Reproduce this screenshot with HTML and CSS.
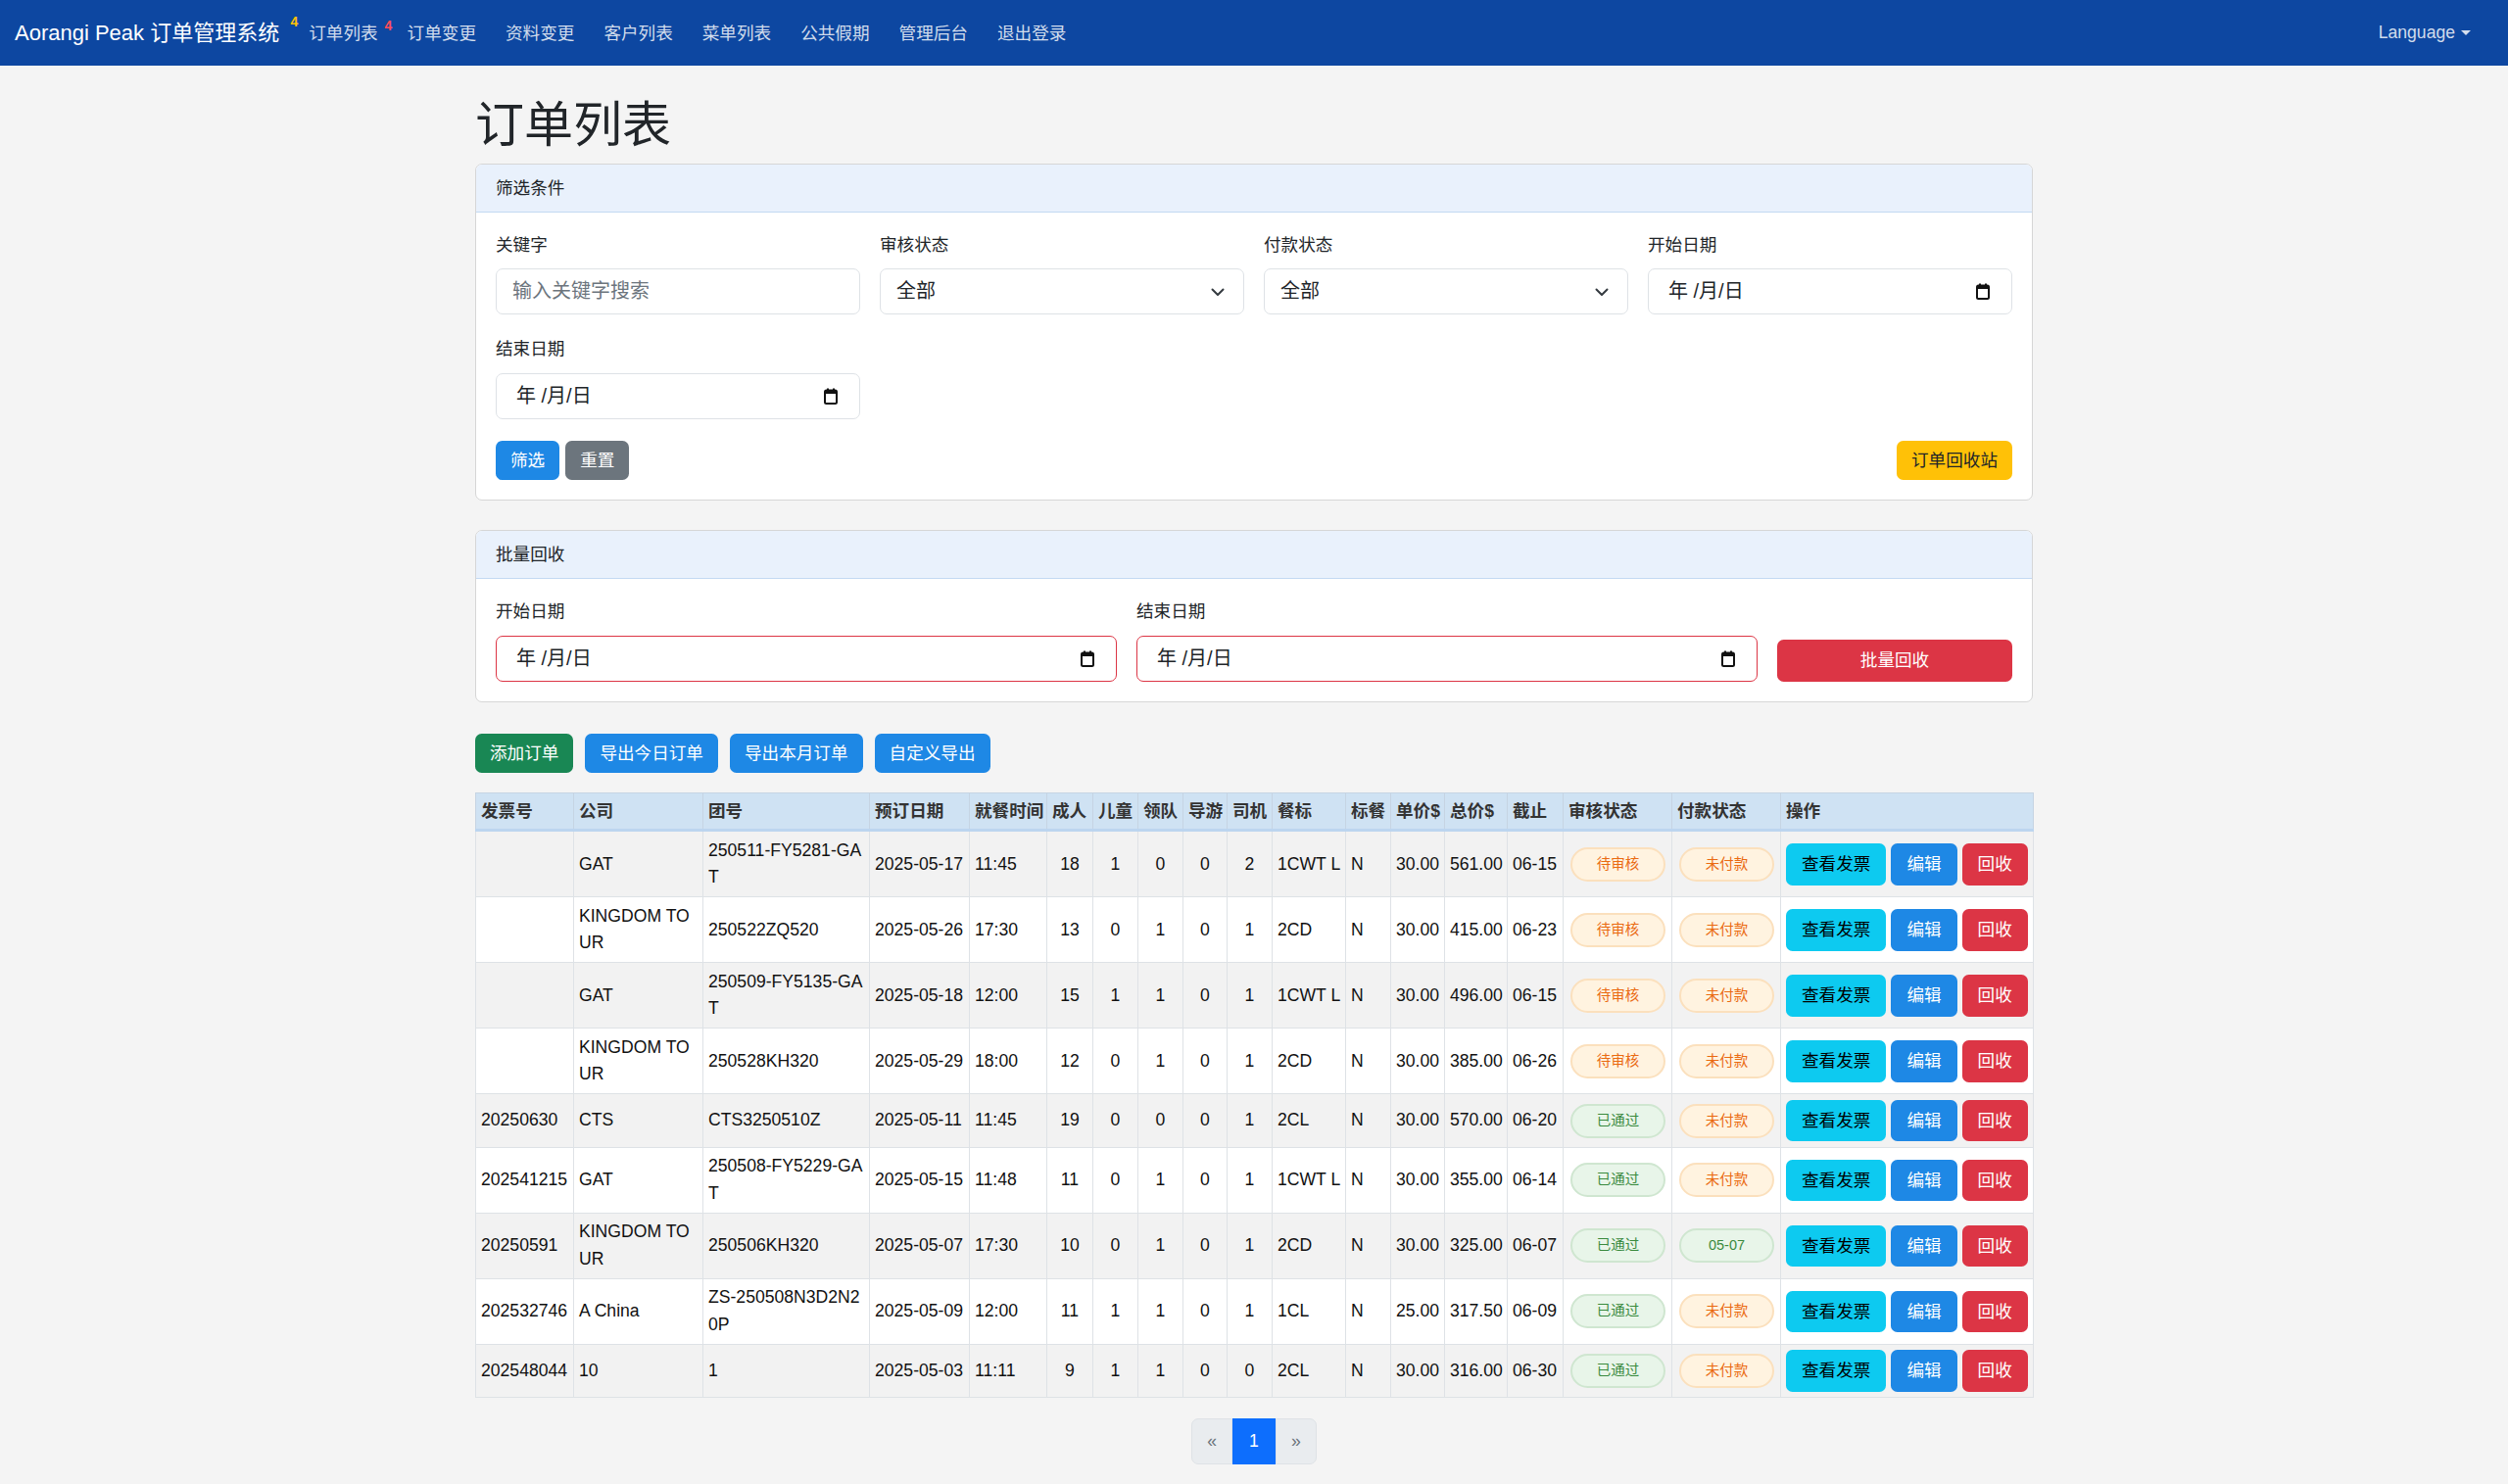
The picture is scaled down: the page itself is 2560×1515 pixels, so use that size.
FILE: index.html
```html
<!DOCTYPE html>
<html lang="zh-CN">
<head>
<meta charset="utf-8">
<title>订单列表 - Aorangi Peak 订单管理系统</title>
<link rel="stylesheet" href="styles.css">
</head>
<body>
<nav class="navbar">
  <a class="brand">Aorangi Peak 订单管理系统<span class="nbadge yellow">4</span></a>
  <ul class="nav-links">
    <li><a class="nav-link">订单列表<span class="nbadge red">4</span></a></li>
    <li><a class="nav-link">订单变更</a></li>
    <li><a class="nav-link">资料变更</a></li>
    <li><a class="nav-link">客户列表</a></li>
    <li><a class="nav-link">菜单列表</a></li>
    <li><a class="nav-link">公共假期</a></li>
    <li><a class="nav-link">管理后台</a></li>
    <li><a class="nav-link">退出登录</a></li>
  </ul>
  <div class="lang">Language<span class="caret"></span></div>
</nav>

<main class="container">
  <h1 class="page-title">订单列表</h1>

  <section class="card">
    <div class="card-header">筛选条件</div>
    <div class="card-body">
      <div class="filter-grid">
        <div class="field">
          <label class="form-label">关键字</label>
          <div class="form-control placeholder">输入关键字搜索</div>
        </div>
        <div class="field">
          <label class="form-label">审核状态</label>
          <div class="form-control select">全部
            <svg class="chev" width="14" height="9" viewBox="0 0 14 9"><path d="M1.5 1.5 7 7l5.5-5.5" stroke="#343a40" stroke-width="2" fill="none" stroke-linecap="round" stroke-linejoin="round"/></svg>
          </div>
        </div>
        <div class="field">
          <label class="form-label">付款状态</label>
          <div class="form-control select">全部
            <svg class="chev" width="14" height="9" viewBox="0 0 14 9"><path d="M1.5 1.5 7 7l5.5-5.5" stroke="#343a40" stroke-width="2" fill="none" stroke-linecap="round" stroke-linejoin="round"/></svg>
          </div>
        </div>
        <div class="field">
          <label class="form-label">开始日期</label>
          <div class="form-control date">年 /月/日
            <svg class="cal" width="14" height="17" viewBox="0 0 14 17"><rect x="1" y="2.5" width="12" height="13.5" rx="1.5" fill="none" stroke="#111" stroke-width="2"/><rect x="1" y="2.5" width="12" height="3.5" fill="#111"/><rect x="3" y="0.5" width="2" height="3" fill="#111"/><rect x="9" y="0.5" width="2" height="3" fill="#111"/></svg>
          </div>
        </div>
        <div class="field">
          <label class="form-label">结束日期</label>
          <div class="form-control date">年 /月/日
            <svg class="cal" width="14" height="17" viewBox="0 0 14 17"><rect x="1" y="2.5" width="12" height="13.5" rx="1.5" fill="none" stroke="#111" stroke-width="2"/><rect x="1" y="2.5" width="12" height="3.5" fill="#111"/><rect x="3" y="0.5" width="2" height="3" fill="#111"/><rect x="9" y="0.5" width="2" height="3" fill="#111"/></svg>
          </div>
        </div>
      </div>
      <div class="filter-actions">
        <div class="btn-group">
          <button class="btn btn-blue">筛选</button>
          <button class="btn btn-grey">重置</button>
        </div>
        <button class="btn btn-yellow">订单回收站</button>
      </div>
    </div>
  </section>

  <section class="card card-batch">
    <div class="card-header">批量回收</div>
    <div class="card-body">
      <div class="batch-grid">
        <div class="field">
          <label class="form-label">开始日期</label>
          <div class="form-control date danger">年 /月/日
            <svg class="cal" width="14" height="17" viewBox="0 0 14 17"><rect x="1" y="2.5" width="12" height="13.5" rx="1.5" fill="none" stroke="#111" stroke-width="2"/><rect x="1" y="2.5" width="12" height="3.5" fill="#111"/><rect x="3" y="0.5" width="2" height="3" fill="#111"/><rect x="9" y="0.5" width="2" height="3" fill="#111"/></svg>
          </div>
        </div>
        <div class="field">
          <label class="form-label">结束日期</label>
          <div class="form-control date danger">年 /月/日
            <svg class="cal" width="14" height="17" viewBox="0 0 14 17"><rect x="1" y="2.5" width="12" height="13.5" rx="1.5" fill="none" stroke="#111" stroke-width="2"/><rect x="1" y="2.5" width="12" height="3.5" fill="#111"/><rect x="3" y="0.5" width="2" height="3" fill="#111"/><rect x="9" y="0.5" width="2" height="3" fill="#111"/></svg>
          </div>
        </div>
        <button class="btn btn-red btn-batch">批量回收</button>
      </div>
    </div>
  </section>

  <div class="toolbar">
    <button class="btn btn-green">添加订单</button>
    <button class="btn btn-blue">导出今日订单</button>
    <button class="btn btn-blue">导出本月订单</button>
    <button class="btn btn-blue">自定义导出</button>
  </div>

  <table class="orders">
    <colgroup>
      <col class="w100"><col class="w132"><col class="w170"><col class="w102"><col class="w79">
      <col class="w47"><col class="w46"><col class="w46"><col class="w45"><col class="w46">
      <col class="w75"><col class="w46"><col class="w55"><col class="w64"><col class="w57">
      <col class="w111"><col class="w111"><col class="w258">
    </colgroup>
    <thead>
      <tr>
        <th>发票号</th><th>公司</th><th>团号</th><th>预订日期</th><th>就餐时间</th>
        <th>成人</th><th>儿童</th><th>领队</th><th>导游</th><th>司机</th>
        <th>餐标</th><th>标餐</th><th>单价$</th><th>总价$</th><th>截止</th>
        <th>审核状态</th><th>付款状态</th><th>操作</th>
      </tr>
    </thead>
    <tbody>
      <tr>
        <td></td><td class="wrap">GAT</td><td class="wrap">250511-FY5281-GAT</td><td>2025-05-17</td><td>11:45</td>
        <td class="c">18</td><td class="c">1</td><td class="c">0</td><td class="c">0</td><td class="c">2</td>
        <td class="clip">1CWT L</td><td>N</td><td>30.00</td><td>561.00</td><td>06-15</td>
        <td><span class="pill warn">待审核</span></td><td><span class="pill warn">未付款</span></td>
        <td><div class="acts"><button class="btn btn-cyan sm">查看发票</button><button class="btn btn-blue sm">编辑</button><button class="btn btn-red sm">回收</button></div></td>
      </tr>
      <tr>
        <td></td><td class="wrap">KINGDOM TOUR</td><td class="wrap">250522ZQ520</td><td>2025-05-26</td><td>17:30</td>
        <td class="c">13</td><td class="c">0</td><td class="c">1</td><td class="c">0</td><td class="c">1</td>
        <td class="clip">2CD</td><td>N</td><td>30.00</td><td>415.00</td><td>06-23</td>
        <td><span class="pill warn">待审核</span></td><td><span class="pill warn">未付款</span></td>
        <td><div class="acts"><button class="btn btn-cyan sm">查看发票</button><button class="btn btn-blue sm">编辑</button><button class="btn btn-red sm">回收</button></div></td>
      </tr>
      <tr>
        <td></td><td class="wrap">GAT</td><td class="wrap">250509-FY5135-GAT</td><td>2025-05-18</td><td>12:00</td>
        <td class="c">15</td><td class="c">1</td><td class="c">1</td><td class="c">0</td><td class="c">1</td>
        <td class="clip">1CWT L</td><td>N</td><td>30.00</td><td>496.00</td><td>06-15</td>
        <td><span class="pill warn">待审核</span></td><td><span class="pill warn">未付款</span></td>
        <td><div class="acts"><button class="btn btn-cyan sm">查看发票</button><button class="btn btn-blue sm">编辑</button><button class="btn btn-red sm">回收</button></div></td>
      </tr>
      <tr>
        <td></td><td class="wrap">KINGDOM TOUR</td><td class="wrap">250528KH320</td><td>2025-05-29</td><td>18:00</td>
        <td class="c">12</td><td class="c">0</td><td class="c">1</td><td class="c">0</td><td class="c">1</td>
        <td class="clip">2CD</td><td>N</td><td>30.00</td><td>385.00</td><td>06-26</td>
        <td><span class="pill warn">待审核</span></td><td><span class="pill warn">未付款</span></td>
        <td><div class="acts"><button class="btn btn-cyan sm">查看发票</button><button class="btn btn-blue sm">编辑</button><button class="btn btn-red sm">回收</button></div></td>
      </tr>
      <tr>
        <td>20250630</td><td class="wrap">CTS</td><td class="wrap">CTS3250510Z</td><td>2025-05-11</td><td>11:45</td>
        <td class="c">19</td><td class="c">0</td><td class="c">0</td><td class="c">0</td><td class="c">1</td>
        <td class="clip">2CL</td><td>N</td><td>30.00</td><td>570.00</td><td>06-20</td>
        <td><span class="pill ok">已通过</span></td><td><span class="pill warn">未付款</span></td>
        <td><div class="acts"><button class="btn btn-cyan sm">查看发票</button><button class="btn btn-blue sm">编辑</button><button class="btn btn-red sm">回收</button></div></td>
      </tr>
      <tr>
        <td>202541215</td><td class="wrap">GAT</td><td class="wrap">250508-FY5229-GAT</td><td>2025-05-15</td><td>11:48</td>
        <td class="c">11</td><td class="c">0</td><td class="c">1</td><td class="c">0</td><td class="c">1</td>
        <td class="clip">1CWT L</td><td>N</td><td>30.00</td><td>355.00</td><td>06-14</td>
        <td><span class="pill ok">已通过</span></td><td><span class="pill warn">未付款</span></td>
        <td><div class="acts"><button class="btn btn-cyan sm">查看发票</button><button class="btn btn-blue sm">编辑</button><button class="btn btn-red sm">回收</button></div></td>
      </tr>
      <tr>
        <td>20250591</td><td class="wrap">KINGDOM TOUR</td><td class="wrap">250506KH320</td><td>2025-05-07</td><td>17:30</td>
        <td class="c">10</td><td class="c">0</td><td class="c">1</td><td class="c">0</td><td class="c">1</td>
        <td class="clip">2CD</td><td>N</td><td>30.00</td><td>325.00</td><td>06-07</td>
        <td><span class="pill ok">已通过</span></td><td><span class="pill ok">05-07</span></td>
        <td><div class="acts"><button class="btn btn-cyan sm">查看发票</button><button class="btn btn-blue sm">编辑</button><button class="btn btn-red sm">回收</button></div></td>
      </tr>
      <tr>
        <td>202532746</td><td class="wrap">A China</td><td class="wrap">ZS-250508N3D2N20P</td><td>2025-05-09</td><td>12:00</td>
        <td class="c">11</td><td class="c">1</td><td class="c">1</td><td class="c">0</td><td class="c">1</td>
        <td class="clip">1CL</td><td>N</td><td>25.00</td><td>317.50</td><td>06-09</td>
        <td><span class="pill ok">已通过</span></td><td><span class="pill warn">未付款</span></td>
        <td><div class="acts"><button class="btn btn-cyan sm">查看发票</button><button class="btn btn-blue sm">编辑</button><button class="btn btn-red sm">回收</button></div></td>
      </tr>
      <tr>
        <td>202548044</td><td class="wrap">10</td><td class="wrap">1</td><td>2025-05-03</td><td>11:11</td>
        <td class="c">9</td><td class="c">1</td><td class="c">1</td><td class="c">0</td><td class="c">0</td>
        <td class="clip">2CL</td><td>N</td><td>30.00</td><td>316.00</td><td>06-30</td>
        <td><span class="pill ok">已通过</span></td><td><span class="pill warn">未付款</span></td>
        <td><div class="acts"><button class="btn btn-cyan sm">查看发票</button><button class="btn btn-blue sm">编辑</button><button class="btn btn-red sm">回收</button></div></td>
      </tr>
    </tbody>
  </table>

  <nav class="pager">
    <span class="page-item first">«</span>
    <span class="page-item active">1</span>
    <span class="page-item last">»</span>
  </nav>
</main>
</body>
</html>
```

FILE: styles.css
```css
* { box-sizing: border-box; }

body {
  margin: 0;
  background: #f4f4f4;
  color: #212529;
  font-family: "Liberation Sans", Arial, "Noto Sans CJK SC", sans-serif;
  font-size: 17.6px;
  line-height: 1.5;
}

/* ---------- navbar ---------- */
.navbar {
  height: 67px;
  background: #0d47a1;
  display: flex;
  align-items: center;
  padding: 0 38px 0 15px;
}
.brand {
  position: relative;
  color: #fff;
  font-size: 22px;
  line-height: 33px;
  margin-right: 15px;
  white-space: nowrap;
}
.nbadge {
  position: absolute;
  font-size: 14px;
  font-weight: 700;
  line-height: 14px;
  top: -2px;
}
.brand .nbadge { right: -19px; }
.nbadge.yellow { color: #ffc107; }
.nav-link .nbadge.red { color: #ff4d5a; top: -2px; left: calc(100% - 8px); }
.nav-links {
  list-style: none;
  margin: 0;
  padding: 0;
  display: flex;
}
.nav-link {
  position: relative;
  display: block;
  padding: 0 15px;
  color: rgba(255, 255, 255, 0.82);
  line-height: 26px;
  white-space: nowrap;
}
.lang {
  margin-left: auto;
  color: rgba(255, 255, 255, 0.82);
  display: flex;
  align-items: center;
}
.caret {
  display: inline-block;
  margin-left: 6px;
  border-top: 5px solid rgba(255, 255, 255, 0.82);
  border-left: 5px solid transparent;
  border-right: 5px solid transparent;
}

/* ---------- container ---------- */
.container {
  width: 1590px;
  margin: 0 auto;
  padding-top: 31px;
}
.page-title {
  font-size: 50px;
  font-weight: 400;
  line-height: 60px;
  margin: 0 0 9px;
}

/* ---------- cards ---------- */
.card {
  background: #fff;
  border: 1px solid #d6d6d6;
  border-radius: 7px;
  overflow: hidden;
}
.card-batch { margin-top: 30px; }
.card-header {
  height: 49px;
  line-height: 48px;
  padding: 0 20px;
  background: #e9f1fc;
  border-bottom: 1px solid #c3d9f2;
}
.card-body { padding: 20px; }

.filter-grid {
  display: grid;
  grid-template-columns: repeat(4, 1fr);
  column-gap: 20px;
}
.field { margin-bottom: 22px; }
.batch-grid .field { margin-bottom: 0; }
.form-label {
  display: block;
  line-height: 26.4px;
  margin-bottom: 11px;
}
.form-control {
  position: relative;
  height: 47px;
  border: 1px solid #dee2e6;
  border-radius: 7px;
  background: #fff;
  padding: 0 16px;
  font-size: 20px;
  line-height: 45px;
  color: #212529;
}
.form-control.placeholder { color: #6c757d; }
.form-control.date { padding-left: 20px; }
.form-control.danger { border-color: #dc3545; }
.chev {
  position: absolute;
  right: 19px;
  top: 19px;
}
.cal {
  position: absolute;
  right: 22px;
  top: 14px;
}

.filter-actions {
  display: flex;
  justify-content: space-between;
  align-items: center;
}
.btn-group { display: flex; gap: 6px; }

.batch-grid {
  display: grid;
  grid-template-columns: 1fr 1fr 240px;
  column-gap: 20px;
  align-items: end;
}
.btn-batch {
  height: 43px;
  width: 100%;
}

/* ---------- buttons ---------- */
.btn {
  font-family: inherit;
  font-size: 17.6px;
  line-height: 26.4px;
  padding: 6px 14px;
  border: 1px solid transparent;
  border-radius: 6.6px;
  color: #fff;
  cursor: pointer;
  white-space: nowrap;
}
.btn-blue { background: #1e88e5; }
.btn-grey { background: #6c757d; }
.btn-yellow { background: #ffc107; color: #212529; }
.btn-red { background: #dc3545; }
.btn-green { background: #198754; }
.btn-cyan { background: #0dcaf0; color: #000; }
.btn.sm { padding: 7px 15px; }

.toolbar {
  margin-top: 32px;
  display: flex;
  gap: 12px;
}

/* ---------- table ---------- */
.orders {
  margin-top: 20px;
  width: 1590px;
  table-layout: fixed;
  border-collapse: collapse;
  border: 1px solid #dee2e6;
  background: #fff;
}
.w100 { width: 100px; } .w132 { width: 132px; } .w170 { width: 170px; }
.w102 { width: 102px; } .w79 { width: 79px; } .w47 { width: 47px; }
.w46 { width: 46px; } .w45 { width: 45px; } .w75 { width: 75px; }
.w55 { width: 55px; } .w64 { width: 64px; } .w57 { width: 57px; }
.w111 { width: 111px; } .w258 { width: 258px; }

.orders th {
  background: #cfe2f3;
  color: #333;
  font-weight: 700;
  text-align: left;
  padding: 5px 5px;
  line-height: 26.4px;
  border: 1px solid #c6d4e3;
  border-bottom: 3px solid #bcd5ef;
  white-space: nowrap;
  overflow: hidden;
}
.orders td {
  padding: 5.5px 5px;
  line-height: 27.5px;
  border: 1px solid #dee2e6;
  vertical-align: middle;
  white-space: nowrap;
  color: #111;
}
.orders tbody tr:nth-child(odd) td { background: #f2f2f2; }
.orders td.wrap {
  white-space: normal;
  word-break: break-all;
}
.orders td.c { text-align: center; }
.orders td.clip { overflow: hidden; }

.pill {
  display: block;
  height: 35px;
  margin: 0 1px 0 2px;
  border: 2px solid;
  border-radius: 18px;
  font-size: 14.5px;
  line-height: 31px;
  text-align: center;
}
.pill.warn { background: #fff3e0; border-color: #fbe0bd; color: #ea6a12; }
.pill.ok { background: #e8f5e9; border-color: #cfe6d0; color: #3a8a3e; }

.acts {
  display: flex;
  gap: 5px;
}

/* ---------- pagination ---------- */
.pager {
  display: flex;
  justify-content: center;
  margin-top: 21px;
}
.page-item {
  display: block;
  padding: 9px 15px;
  line-height: 26.4px;
  height: 47px;
  background: #e9ecef;
  color: #6c757d;
  border: 1px solid #dee2e6;
}
.page-item.first { border-radius: 7px 0 0 7px; }
.page-item.last { border-radius: 0 7px 7px 0; }
.page-item.active {
  background: #0d6efd;
  border-color: #0d6efd;
  color: #fff;
  padding: 9px 16px;
}
```
